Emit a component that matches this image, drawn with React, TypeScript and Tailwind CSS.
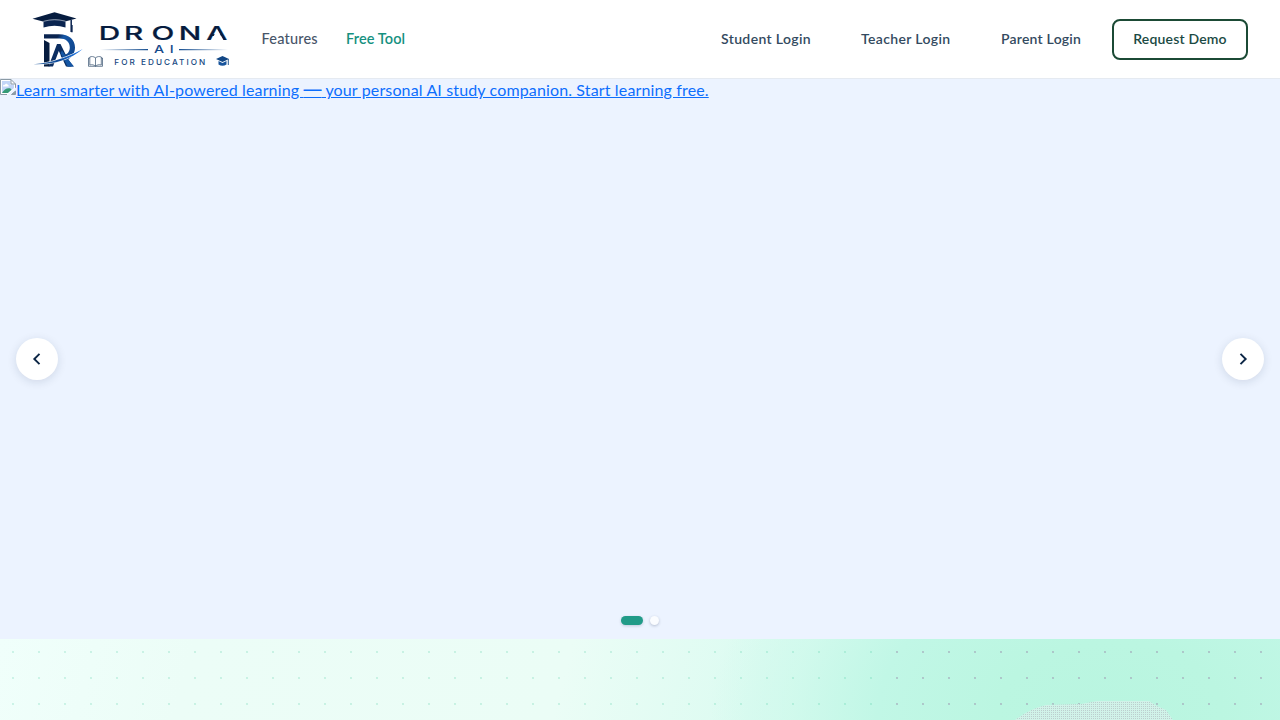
import React from "react";
import clsx from "clsx";

const loginLinks = [
  { title: "Student Login", href: "/student", className: "w-[90px]" },
  { title: "Teacher Login", href: "/teacher", className: "w-[90px]" },
  { title: "Parent Login", href: "/parent", className: "w-[80px] tracking-[0.22px]" },
];

const Logo = () => (
  <svg width="200" height="60" viewBox="30 9 200 60" className="shrink-0">
    <defs>
      <linearGradient id="bowl" x1="0" x2="1" y1="0" y2="0.6">
        <stop offset="0.35" stopColor="#0a2450" />
        <stop offset="0.5" stopColor="#1556a4" />
        <stop offset="1" stopColor="#10458c" />
      </linearGradient>
      <linearGradient id="swoosh" x1="0" x2="1">
        <stop offset="0" stopColor="#3b6ea8" />
        <stop offset="0.5" stopColor="#0f4a98" />
        <stop offset="1" stopColor="#1f7cf0" />
      </linearGradient>
      <linearGradient id="lineLeft" x1="0" x2="1">
        <stop offset="0" stopColor="#174f91" stopOpacity="0" />
        <stop offset="1" stopColor="#174f91" />
      </linearGradient>
      <linearGradient id="lineRight" x1="0" x2="1">
        <stop offset="0" stopColor="#174f91" />
        <stop offset="1" stopColor="#174f91" stopOpacity="0" />
      </linearGradient>
    </defs>

    {/* cap */}
    <path d="M43.5 20.5 Q54 18 65.5 20.5 V27.5 Q54.5 24 43.5 27.5 Z" fill="#0a2450" />
    <path d="M32.5 18.7 L54.5 12.2 L76.5 18.5 L66 21.2 Q54.5 17.6 43 21.4 Z" fill="#061c3f" />
    <path d="M43.5 21.3 Q54.5 18.2 65.5 21.2" fill="none" stroke="#dfe6ef" strokeWidth="0.6" />
    <path d="M71.2 20 V32 M71.9 25 V32.3" stroke="#0a2450" strokeWidth="1.5" />

    {/* monogram */}
    <path
      d="M44 34.3 H59 C69.5 34.3 75 40 75 47.5 C75 53 72 57 68 59.5 L74 66.5 H67.5 L60.5 55.5 C66.5 55.5 69.8 52.5 69.8 47.5 C69.8 42 66 38.6 59.5 38.6 H44 Z"
      fill="url(#bowl)"
    />
    <path d="M44 40 L49.5 43 V66.5 H44 Z" fill="#061c3f" />
    <path d="M48.5 66.5 L57 44 H60.5 L71.5 66.5 H66 L58.8 51 L53 66.5 Z" fill="#0b2d60" />
    <path d="M62 50.5 L73.5 66.5 H67.5 L60.5 53 Z" fill="#1556a4" />
    <path d="M33.5 64.2 C51 63 68 57 82.8 49 C70 60 52 65.2 33.5 64.2 Z" fill="#fff" stroke="#fff" strokeWidth="0.8" />
    <path d="M33.5 64.2 C51 63.2 68 57.4 82.8 49 C70 60 52 65 33.5 64.2 Z" fill="url(#swoosh)" />

    <g transform="scale(1.55 1)">
      <text
        x="63.7 80 97.7 115.3 133.1"
        y="39.9"
        fill="#061c3f"
        stroke="#061c3f"
        strokeWidth="0.2"
        fontFamily="Inter, sans-serif"
        fontWeight="500"
        fontSize="19.2"
      >
        DRONA
      </text>
    </g>
    {/* the last letter has no crossbar */}
    <path d="M217.3 29.8 L223.8 40.8 H210.9 Z" fill="#fff" />

    <path d="M100 49 H148 V50.2 H100 Z" fill="url(#lineLeft)" />
    <path d="M179 49 H228 V50.2 H179 Z" fill="url(#lineRight)" />
    <g transform="scale(1.4 1)">
      <text
        x="110 121.3"
        y="53.2"
        fill="#164a8a"
        fontFamily="Inter, sans-serif"
        fontWeight="500"
        fontSize="10.2"
      >
        AI
      </text>
    </g>
    <text
      x="114.3"
      y="65"
      textLength="91"
      fill="#15477f"
      fontFamily="Inter, sans-serif"
      fontWeight="500"
      fontSize="8.2"
    >
      FOR EDUCATION
    </text>

    {/* open book */}
    <path
      d="M95.5 57.8 C93.5 56.3 91.5 56.3 89.8 57 V65 C92 64.3 94 64.8 95.5 66.2 C97 64.8 99 64.3 101.3 65 V57 C99.5 56.3 97.5 56.3 95.5 57.8 V66 M89.8 58 H88.5 V66.3 H102.5 V58 H101.3"
      fill="none"
      stroke="#35506e"
      strokeWidth="0.7"
    />
    {/* small cap */}
    <path d="M216 59 L222.5 56 L229 59 L222.5 62 Z" fill="#124785" />
    <path d="M218.5 61 L222.5 63 L226.5 61 V64.5 Q222.5 67 218.5 64.5 Z" fill="#17549c" />
    <path d="M228.3 59 V65" stroke="#124785" strokeWidth="0.9" />
  </svg>
);

const BrokenImage = () => (
  <svg width="16" height="16" viewBox="0 0 16 16" className="shrink-0">
    <path d="M0.5 0.5 H11 L15.5 5 V10 L10 15.5 H0.5 Z" fill="#fff" />
    <path d="M2 2 H10.5 V5.5 H14 V9 L8 14 H2 Z" fill="#c3d6f7" />
    <path d="M3 7.3 C3 5.8 4.5 5.7 4.8 6 C5.3 4.3 7.6 4.6 7.8 6 C9 6 9 7.3 8.5 7.5 H3 Z" fill="#fff" />
    <path d="M2 14 C4 10.5 7 8.5 10.5 9.5 L11.5 10.8 L7.8 14 Z" fill="#359b76" />
    <path d="M15.5 9.5 V5 L11 0.5 H0.5 V15.5 H7 M11 0.5 V5 H15.5" fill="none" stroke="#8b9aa5" />
    <path d="M7 16 L16 8.5 V11 L11 16 Z" fill="#ecf3ff" />
    <path d="M11.5 15.5 H15.5 V12 Z" fill="#8b9aa5" stroke="#8b9aa5" />
  </svg>
);

const Navbar = () => {
  return (
    <header className="flex h-[79px] items-center border-b border-[#e5eaf1] bg-white pr-8 pl-[30px]">
      <Logo />
      <nav className="flex flex-1 items-center pl-[31.5px] text-[14.5px]">
        <a href="#features" className="w-[84.5px] whitespace-nowrap font-medium tracking-[0.2px] text-[#475569]">
          Features
        </a>
        <a href="#free-tool" className="whitespace-nowrap font-semibold tracking-[0.1px] text-[#16917f]">
          Free Tool
        </a>
      </nav>
      <aside className="flex items-center text-[14px] font-semibold text-[#334a60]">
        <div className="mr-[31px] flex gap-[50px] pb-0.5 tracking-[0.36px]">
          {loginLinks.map((link) => (
            <a key={link.title} href={link.href} className={clsx("whitespace-nowrap", link.className)}>
              {link.title}
            </a>
          ))}
        </div>
        <a
          href="#demo"
          className="flex h-[41px] w-[136px] items-center justify-center rounded-lg border-2 border-[#1b4a35] pb-0.5 whitespace-nowrap tracking-[0.18px] text-[#1b4a44]"
        >
          Request Demo
        </a>
      </aside>
    </header>
  );
};

type ArrowProps = {
  label: string;
  d: string;
  className: string;
};

const Arrow = ({ label, d, className }: ArrowProps) => (
  <button
    aria-label={label}
    className={clsx(
      "absolute top-[259px] flex size-[42px] items-center justify-center rounded-full bg-white shadow-[0_2px_10px_rgba(15,35,70,0.13)]",
      className
    )}
  >
    <svg width="20" height="20" viewBox="0 0 20 20" fill="none" stroke="#0b2545" strokeWidth="1.9">
      <path d={d} />
    </svg>
  </button>
);

const Hero = () => {
  return (
    <section className="relative h-[560px] bg-[#ecf3ff]">
      <a href="#start" className="flex text-[16px] leading-[22px] text-[#0d6efd]">
        <BrokenImage />
        <span className="whitespace-nowrap tracking-[0.14px] underline">
          Learn smarter with AI-powered learning <span className="font-[Inter] text-[18px] leading-none">—</span> your
          personal AI study companion. Start learning free.
        </span>
      </a>
      <Arrow label="Previous" d="M12.5 4.8 L7.3 10 L12.5 15.2" className="left-4" />
      <Arrow label="Next" d="M7.5 4.8 L12.7 10 L7.5 15.2" className="right-4" />
      <div className="absolute bottom-3.5 left-[621px] flex items-center gap-[7px]">
        <span className="h-[9px] w-[22px] rounded-full bg-[#219b88] shadow-[0_1px_3px_rgba(15,35,70,0.2)]" />
        <span className="size-[9px] rounded-full bg-[#fafcff] shadow-[0_1px_3px_rgba(15,35,70,0.25)]" />
      </div>
    </section>
  );
};

const App = () => {
  return (
    <div className="h-[720px] overflow-hidden bg-white font-[Lato,sans-serif]">
      <Navbar />
      <Hero />
      <section className="relative h-[81px] overflow-hidden bg-[radial-gradient(ellipse_400px_260px_at_1110px_75px,#b9f5e0_0%,#bbf6e1_28%,#c1f7e6_58%,rgba(205,249,235,0.7)_80%,rgba(216,251,239,0)_100%),linear-gradient(105deg,#f0fffb_0%,#ecfdf7_15%,#ebfdf6_44%,#dcfbf1_59%,#c6f6e8_100%)]">
        <div className="absolute inset-0 bg-[radial-gradient(circle,rgba(16,185,129,0.16)_1px,transparent_1px)] bg-[size:26px_26px]" />
        <div className="absolute inset-y-0 right-0 left-[884px] bg-[radial-gradient(circle,rgba(190,150,190,0.42)_1px,transparent_1px)] bg-[size:26px_26px]" />
        <svg className="absolute top-[61px] left-[1015px]" width="164" height="20" viewBox="0 0 164 20">
          <defs>
            <pattern id="grain" width="2" height="2" patternUnits="userSpaceOnUse">
              <rect width="2" height="2" fill="#d1f3e9" />
              <rect width="1" height="1" fill="#bccfce" />
            </pattern>
          </defs>
          <path d="M0 20 Q14 9 31 5 L66 4 L82 1 H134 L142 6 L151 10 L158 20 Z" fill="url(#grain)" />
        </svg>
      </section>
    </div>
  );
};

export default App;
